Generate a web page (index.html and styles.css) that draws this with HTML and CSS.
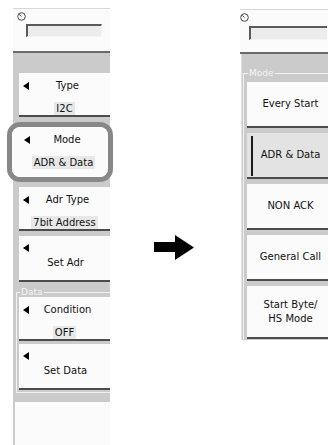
FILE: index.html
```html
<!DOCTYPE html>
<html lang="en">
<head>
    <meta charset="UTF-8">
    <title>I2C Trigger Mode</title>
    <link rel="stylesheet" href="styles.css">
</head>
<body>
    <div class="scene">
        <div class="panel panel-left">
            <div class="panel-top">
                <svg class="knob" width="9" height="9" viewBox="0 0 9 9">
                    <circle cx="4.5" cy="4.5" r="3.8" fill="none" stroke="#333" stroke-width="0.9"/>
                    <line x1="4.5" y1="4.5" x2="2.2" y2="2.4" stroke="#333" stroke-width="0.9"/>
                </svg>
                <div class="field"></div>
            </div>
            <div class="panel-body">
                <div class="key">
                    <div class="key-head"><span class="tri"></span><span class="key-label">Type</span></div>
                    <span class="key-value">I2C</span>
                </div>

                <div class="focus-ring">
                    <div class="key key-focus">
                        <div class="key-head"><span class="tri"></span><span class="key-label">Mode</span></div>
                        <span class="key-value">ADR &amp; Data</span>
                    </div>
                </div>

                <div class="key">
                    <div class="key-head"><span class="tri"></span><span class="key-label">Adr Type</span></div>
                    <span class="key-value">7bit Address</span>
                </div>

                <div class="key key-action">
                    <span class="tri"></span>
                    <span class="key-label">Set Adr</span>
                </div>

                <fieldset class="group">
                    <legend>Data</legend>
                    <div class="key">
                        <div class="key-head"><span class="tri"></span><span class="key-label">Condition</span></div>
                        <span class="key-value">OFF</span>
                    </div>
                    <div class="key key-action">
                        <span class="tri"></span>
                        <span class="key-label">Set Data</span>
                    </div>
                </fieldset>

                <div class="blank"></div>
            </div>
        </div>

        <div class="arrow-col">
            <svg width="40" height="25" viewBox="0 0 40 25">
                <polygon points="0,7 21,7 21,0 40,12.5 21,25 21,17 0,17" fill="#000"/>
            </svg>
        </div>

        <div class="panel panel-right">
            <div class="panel-top">
                <svg class="knob" width="9" height="9" viewBox="0 0 9 9">
                    <circle cx="4.5" cy="4.5" r="3.8" fill="none" stroke="#333" stroke-width="0.9"/>
                    <line x1="4.5" y1="4.5" x2="2.2" y2="2.4" stroke="#333" stroke-width="0.9"/>
                </svg>
                <div class="field"></div>
            </div>
            <div class="panel-body">
                <fieldset class="group group-menu">
                    <legend>Mode</legend>
                    <div class="option">Every Start</div>
                    <div class="option selected">ADR &amp; Data</div>
                    <div class="option">NON ACK</div>
                    <div class="option">General Call</div>
                    <div class="option option-tall">Start Byte/<br>HS Mode</div>
                </fieldset>
            </div>
        </div>
    </div>
</body>
</html>
```

FILE: styles.css
```css
body {
    margin: 0;
    background: #fff;
    font-family: "DejaVu Sans", Verdana, sans-serif;
    font-size: 10px;
    color: #111;
    overflow: hidden;
    height: 445px;
}
.scene {
    display: flex;
    align-items: flex-start;
    width: 328px;
}
.scene > * {
    flex: none;
}
.panel {
    display: flex;
    flex-direction: column;
}
.panel-left {
    width: 97px;
    margin: 8px 0 0 13px;
}
.panel-right {
    width: 87px;
    margin-top: 9px;
}
.panel-top {
    background: #fbfbfb;
    border-top: 1px solid #d8d8d8;
    border-bottom: 2px solid #6a6a6a;
    padding: 3px 0 0 4px;
    height: 39px;
}
.knob {
    display: block;
}
.field {
    width: 76px;
    height: 13px;
    margin: 3px 0 0 9px;
    background: #ececec;
    border-top: 2px solid #5a5a5a;
    border-left: 2px solid #5a5a5a;
    border-right: 1px solid #f4f4f4;
    border-bottom: 1px solid #f4f4f4;
    box-sizing: border-box;
}
.panel-right .panel-top {
    padding: 3px 0 0 0;
    margin-left: -1px;
}
.panel-right .field {
    margin: 4px 0 0 9px;
    width: 78px;
    height: 14px;
    border-right: none;
}
.panel-body {
    background: #cbcbcb;
    padding: 20px 0 0 6px;
    height: 392px;
    box-sizing: border-box;
}
.panel-right .panel-body {
    height: 286px;
    padding: 14px 0 0 1px;
    border-left: 1px solid #e2e2e2;
}

/* soft keys */
.key {
    height: 36px;
    background: #fbfbfb;
    border-bottom: 2px solid #4c4c4c;
    display: flex;
    flex-direction: column;
    align-items: center;
    padding-top: 6px;
}
.key-head {
    display: flex;
    align-items: center;
    align-self: stretch;
    padding-left: 4px;
    height: 13px;
}
.tri {
    width: 0;
    height: 0;
    border-top: 4px solid transparent;
    border-bottom: 4px solid transparent;
    border-right: 6px solid #000;
    flex: none;
}
.key-label {
    flex: 1;
    text-align: center;
    margin-right: 4px;
    white-space: nowrap;
}
.key-value {
    margin-top: 10px;
    background: #e8e8e8;
    padding: 0 2px;
    line-height: 13px;
    white-space: nowrap;
}
.key-action {
    height: 38px;
    align-items: stretch;
}
.key-action .tri {
    margin: 2px 0 0 4px;
}
.key-action .key-label {
    flex: none;
    margin: 5px 0 0 0;
    padding-left: 2px;
}

.focus-ring {
    margin: 5px -3px 5px -12px;
    border: 5px solid #878787;
    border-radius: 13px;
    background: #fbfbfb;
    overflow: hidden;
}
.key-focus {
    height: 44px;
    border-bottom: none;
    padding-left: 7px;
}
.key-focus .key-head {
    padding-left: 5px;
}
.focus-ring ~ .key-action {
    margin-top: 5px;
}

/* groups */
.group {
    margin: 5px 0 0 -3px;
    padding: 0 0 2px 2px;
    border: 1px solid #f1f1f1;
    border-right: none;
}
.group legend {
    padding: 0 1px;
    margin-left: 1px;
    font-size: 9px;
    line-height: 10px;
    color: #f4f4f4;
}
.group .key + .key {
    margin-top: 3px;
}
.blank {
    margin: 9px 0 0 -4px;
    height: 60px;
    background: #fbfbfb;
}

/* arrow */
.arrow-col {
    width: 131px;
    padding: 235px 0 0 44px;
    box-sizing: border-box;
}
.arrow-col svg {
    display: block;
}

/* menu options */
.group-menu {
    margin: 0;
    padding: 4px 0 0 3px;
    border-bottom: none;
}
.option {
    height: 44px;
    background: #fbfbfb;
    border-bottom: 2px solid #4c4c4c;
    display: flex;
    align-items: center;
    justify-content: center;
    text-align: center;
    line-height: 14px;
    padding-left: 6px;
    margin-bottom: 5px;
}
.option.selected {
    background: linear-gradient(#1a1a1a, #1a1a1a) 4px 3px / 2px calc(100% - 4px) no-repeat, #e3e3e3;
}
.option-tall {
    height: 51px;
}
```
